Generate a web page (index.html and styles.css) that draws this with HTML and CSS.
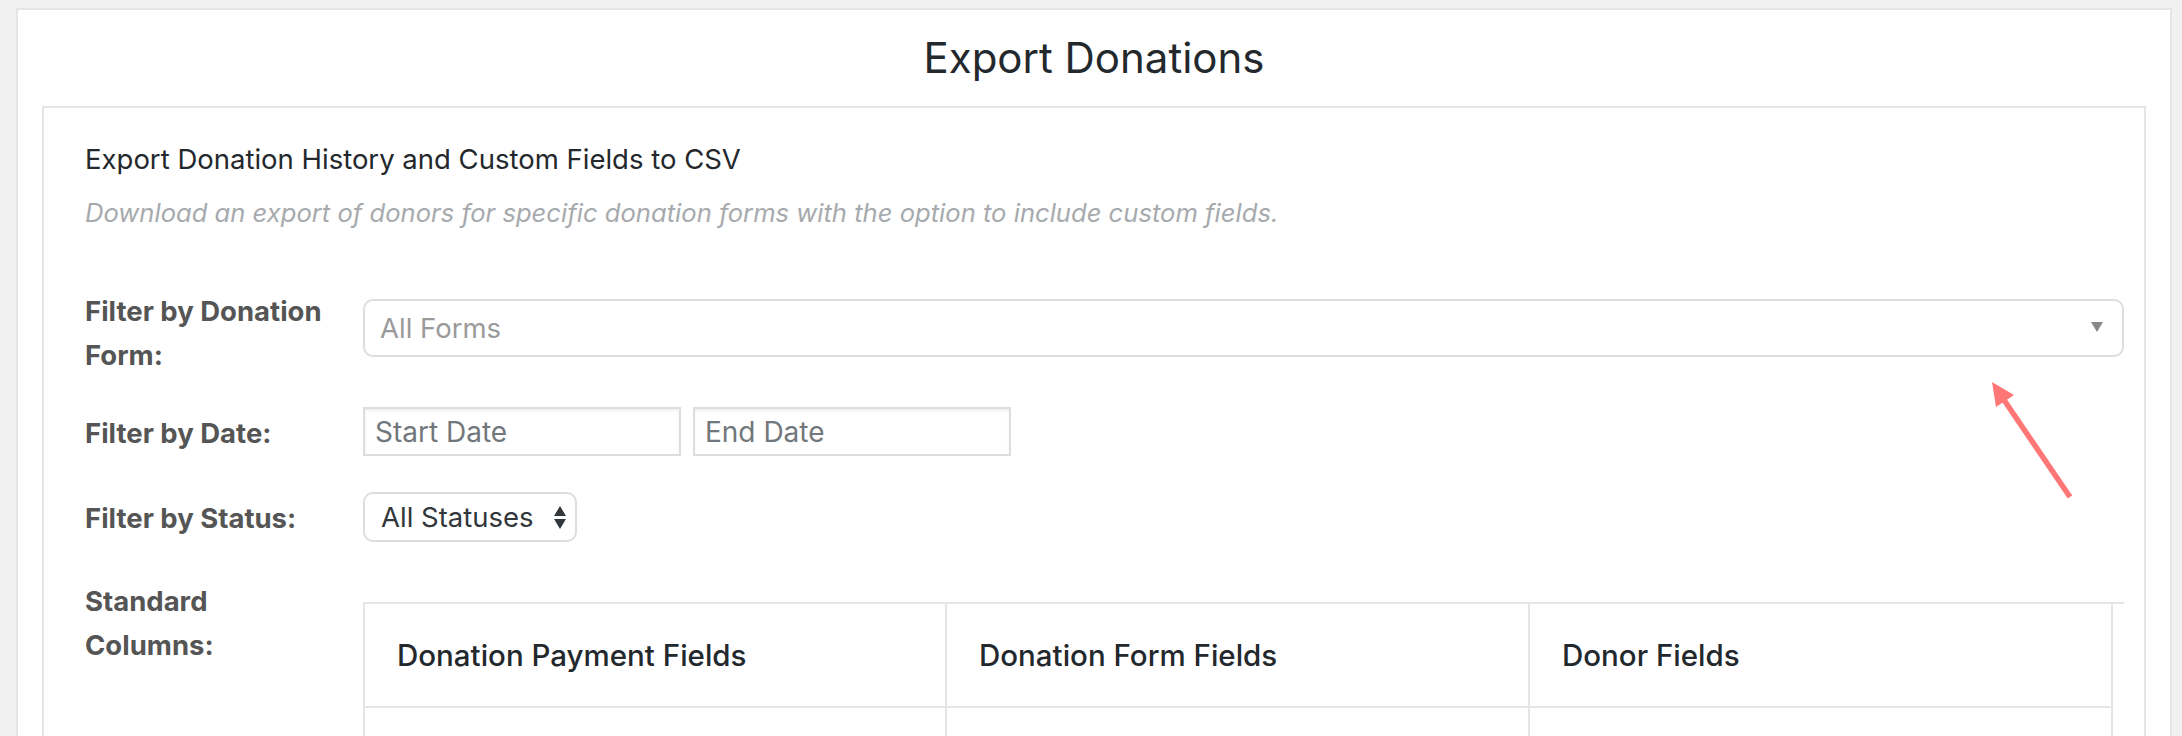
FILE: index.html
```html
<!DOCTYPE html>
<html lang="en">
<head>
<meta charset="utf-8">
<title>Export Donations</title>
<link rel="stylesheet" href="styles.css">
</head>
<body>
<div class="card">
  <h1 class="title">Export Donations</h1>
  <div class="panel">
    <h2 class="panel-title">Export Donation History and Custom Fields to CSV</h2>
    <p class="desc">Download an export of donors for specific donation forms with the option to include custom fields.</p>

    <div class="row row-form">
      <div class="label">Filter by Donation Form:</div>
      <div class="control control-form">
        <div class="select-wide"><span class="placeholder">All Forms</span><span class="caret"></span></div>
      </div>
    </div>

    <div class="row row-date">
      <div class="label">Filter by Date:</div>
      <div class="control dates">
        <div class="input"><span>Start Date</span></div>
        <div class="input"><span>End Date</span></div>
      </div>
    </div>

    <div class="row row-status">
      <div class="label">Filter by Status:</div>
      <div class="control">
        <div class="select-small"><span>All Statuses</span><span class="updown"><i class="up"></i><i class="down"></i></span></div>
      </div>
    </div>

    <div class="row row-columns">
      <div class="label">Standard Columns:</div>
      <div class="control control-table">
        <div class="table">
          <div class="th">Donation Payment Fields</div>
          <div class="th">Donation Form Fields</div>
          <div class="th">Donor Fields</div>
          <div class="td"></div>
          <div class="td"></div>
          <div class="td"></div>
        </div>
      </div>
    </div>
  </div>
</div>

<svg class="annotation" width="2182" height="736" viewBox="0 0 2182 736" aria-hidden="true">
  <line x1="2070" y1="497" x2="2004" y2="400" stroke="#ff7676" stroke-width="5.5" stroke-linecap="butt"/>
  <polygon points="1992,382 2014,395 1996,407" fill="#ff7676"/>
</svg>
</body>
</html>
```

FILE: styles.css
```css
html, body {
  margin: 0;
  padding: 0;
}

body {
  background: #f1f1f1;
  font-family: Inter, "Noto Sans", "Liberation Sans", sans-serif;
  color: #23282d;
  overflow: hidden;
  height: 736px;
  position: relative;
}

.card {
  margin: 8px 10px 0 16px;
  background: #fff;
  border: 2px solid #e5e5e5;
  padding: 0 24px 40px 24px;
}

.title {
  margin: 24px 0 24px 0;
  font-size: 42px;
  line-height: 48px;
  font-weight: 400;
  text-align: center;
  color: #23282d;
}

.panel {
  border: 2px solid #e5e5e5;
  padding: 32px 20px 40px 41px;
}

.panel-title {
  margin: 0;
  font-size: 27.5px;
  line-height: 39px;
  font-weight: 400;
  color: #23282d;
}

.desc {
  margin: 14px 0 0 0;
  font-size: 25.6px;
  line-height: 39px;
  font-style: italic;
  color: #a7aaad;
}

.row {
  display: flex;
  align-items: flex-start;
}

.label {
  width: 278px;
  flex: 0 0 278px;
  box-sizing: border-box;
  padding-right: 30px;
  font-size: 27.5px;
  line-height: 44px;
  font-weight: 700;
  color: #555;
}

.control {
  flex: 1 1 auto;
  min-width: 0;
}

.row-form { margin-top: 57px; }
.row-form .control { margin-top: 10px; }

.row-date { margin-top: 30px; }
.row-date .label { padding-top: 4px; }

.row-status { margin-top: 36px; }
.row-status .label { padding-top: 4px; }

.row-columns { margin-top: 37px; }
.row-columns .control { margin-top: 23px; }

.select-wide {
  box-sizing: border-box;
  height: 58px;
  border: 2px solid #dedede;
  border-radius: 10px;
  display: flex;
  align-items: center;
  justify-content: space-between;
  padding: 0 19px 0 15px;
  font-size: 27.5px;
  color: #9a9a9a;
}

.caret {
  width: 0;
  height: 0;
  border-left: 6px solid transparent;
  border-right: 6px solid transparent;
  border-top: 10px solid #888;
  margin-top: -3px;
}

.dates {
  display: flex;
  gap: 12px;
}

.input {
  box-sizing: border-box;
  width: 318px;
  height: 49px;
  border: 2px solid #dddddd;
  box-shadow: inset 0 2px 3px rgba(0, 0, 0, 0.06);
  display: flex;
  align-items: center;
  padding-left: 10px;
  font-size: 28px;
  color: #72777c;
}

.select-small {
  box-sizing: border-box;
  width: 214px;
  height: 50px;
  border: 2px solid #dedede;
  border-radius: 10px;
  display: flex;
  align-items: center;
  justify-content: space-between;
  padding: 0 9px 0 16px;
  font-size: 27.5px;
  color: #32373c;
}

.updown {
  display: flex;
  flex-direction: column;
  gap: 3px;
}

.updown i {
  display: block;
  width: 0;
  height: 0;
  border-left: 6px solid transparent;
  border-right: 6px solid transparent;
}

.updown .up { border-bottom: 10px solid #32373c; }
.updown .down { border-top: 10px solid #32373c; }

.control-table {
  border-top: 2px solid #e5e5e5;
}

.table {
  display: grid;
  grid-template-columns: 582px 583px 583px;
  width: max-content;
  border-right: 2px solid #e5e5e5;
}

.th {
  border-left: 2px solid #e5e5e5;
  border-bottom: 2px solid #e5e5e5;
  padding: 33px 32px;
  font-size: 29.5px;
  line-height: 36px;
  font-weight: 500;
  color: #23282d;
}

.td {
  border-left: 2px solid #e5e5e5;
  height: 120px;
}

.annotation {
  position: absolute;
  left: 0;
  top: 0;
  pointer-events: none;
}
```
